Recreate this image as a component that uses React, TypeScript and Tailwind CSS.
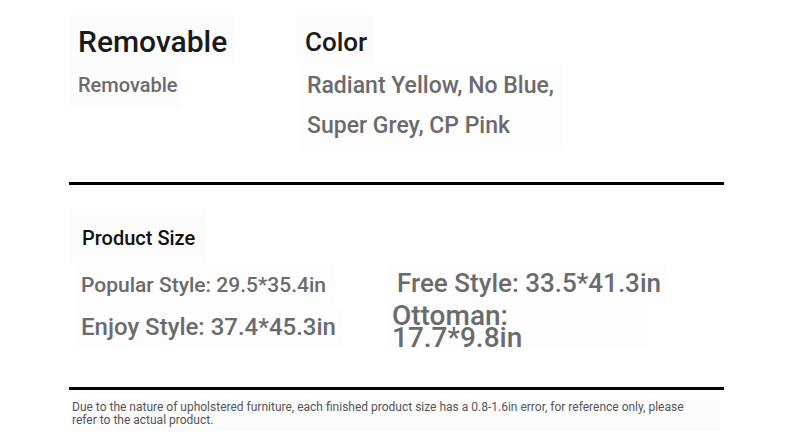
export default function App() {
  return (
    <div className="w-[790px] h-[434px] bg-white overflow-hidden font-['Roboto',sans-serif]">
      {/* top specs */}
      <div className="flex pt-[15px] pl-[70px] h-[182px]">
        <div className="flex flex-col items-start w-[226px]">
          <div className="bg-[#fcfcfc] h-[47px] pt-[6px] pl-[8px] pr-[8px] flex items-center">
            <h2 className="text-[30px] font-medium text-[#1a1a1a] leading-none">Removable</h2>
          </div>
          <div className="bg-[#fcfcfc] h-[46px] w-[110px] pl-[8px] flex items-center">
            <p className="text-[20px] font-medium text-[#6b6b6b] leading-none">Removable</p>
          </div>
        </div>
        <div className="flex flex-col items-start">
          <div className="bg-[#fcfcfc] h-[47px] pt-[6px] w-[79px] pl-[9px] flex items-center">
            <h2 className="text-[26px] font-medium text-[#1a1a1a] leading-none">Color</h2>
          </div>
          <div className="bg-[#fdfdfd] ml-[4px] w-[263px] pl-[7px] pt-[4px] pb-[4px]">
            <p className="text-[23px] font-medium text-[#6b6b6b] leading-[40px]">
              Radiant Yellow, No Blue,
              <br />
              Super Grey, CP Pink
            </p>
          </div>
        </div>
      </div>

      <div className="ml-[69px] w-[655px] h-[3px] bg-black" />

      {/* product size */}
      <div className="pt-[25px] pl-[70px] h-[202px]">
        <div className="bg-[#fcfcfc] w-[137px] h-[52px] pl-[12px] pt-[4px] flex items-center">
          <h3 className="text-[20px] font-medium text-[#111] leading-none">Product Size</h3>
        </div>
        <div className="grid grid-cols-[318px_1fr]">
          <div className="flex flex-col items-start pl-[6px] pt-[2px]">
            <div className="bg-[#fdfdfd] h-[42px] w-[259px] pl-[5px] flex items-center">
              <p className="text-[21px] font-medium text-[#6b6b6b] leading-none">Popular Style: 29.5*35.4in</p>
            </div>
            <div className="bg-[#fdfdfd] h-[42px] w-[267px] pl-[5px] flex items-center">
              <p className="text-[24px] font-medium text-[#6b6b6b] leading-none">Enjoy Style: 37.4*45.3in</p>
            </div>
          </div>
          <div className="flex flex-col items-start pt-[1px]">
            <div className="bg-[#fdfdfd] h-[42px] w-[279px] pl-[9px] pb-[3px] flex items-center">
              <p className="text-[26px] font-medium text-[#6b6b6b] leading-none">Free Style: 33.5*41.3in</p>
            </div>
            <div className="bg-[#fdfdfd] h-[43px] w-[260px] pl-[4px] flex items-center">
              <p className="text-[28px] font-medium text-[#6b6b6b] leading-[22px] w-[150px]">Ottoman: 17.7*9.8in</p>
            </div>
          </div>
        </div>
      </div>

      <div className="ml-[69px] w-[655px] h-[3px] bg-black" />

      {/* note */}
      <div className="ml-[69px] mt-[8px] w-[651px] bg-[#fcfcfc] pl-[3px] pt-[3px] pb-[4px]">
        <p className="text-[12px] text-[#555] leading-[13px] w-[625px]">
          Due to the nature of upholstered furniture, each finished product size has a 0.8-1.6in error, for reference only, please refer to the actual product.
        </p>
      </div>
    </div>
  );
}
